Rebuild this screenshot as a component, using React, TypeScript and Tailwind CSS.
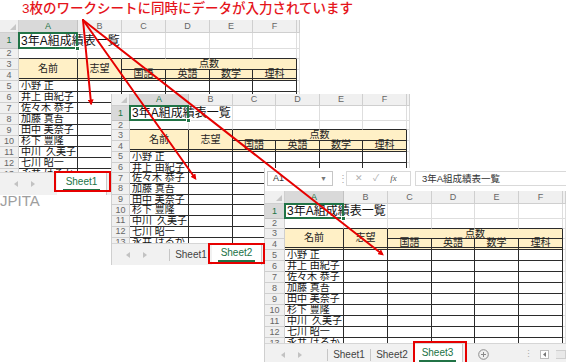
import type { ReactNode } from 'react';

const COLS = ['A', 'B', 'C', 'D', 'E', 'F'];
const SUBJECTS = ['国語', '英語', '数学', '理科'];
const NAMES = ['小野 正', '井上 由紀子', '佐々木 恭子', '加藤 真吾', '田中 美奈子', '杉下 豊隆', '中川\u2002久美子', '七川 昭一', '永井 はるか'];

const HEAD = 'flex items-center justify-center border-r border-b border-[#cfcfcf] bg-[#f0f0f0] text-[9px] leading-none text-[#666]';
const HEAD_SEL = 'flex items-center justify-center border-r border-b border-[#c2c2c2] bg-[#d9d9d9] text-[9px] leading-none text-[#217346]';
const GRID = 'border-r border-b border-[#dedede] bg-white';
const ABOVE = 'border-r border-b border-r-[#dedede] border-b-[#2b2b2b] bg-white';
const LINE = 'border-r border-b border-[#2b2b2b] bg-white';
const FILL = 'flex items-center justify-center border-r border-b border-[#2b2b2b] bg-[#fff0c6] text-[10px] leading-none text-[#222]';
const FILL_LAST =
  'flex items-center justify-center border-r border-b-[3px] border-double border-[#2b2b2b] bg-[#fff0c6] text-[10px] leading-none text-[#222]';

function SheetGrid({ layout }: { layout: string }) {
  const cells: ReactNode[] = [];

  cells.push(
    <div key="corner" className="relative border-r border-b border-[#cfcfcf] bg-[#f0f0f0]">
      <span className="absolute right-[2px] bottom-[2px] h-0 w-0 border-b-[6px] border-l-[6px] border-b-[#c6c6c6] border-l-transparent" />
    </div>,
  );
  COLS.forEach((c, i) =>
    cells.push(
      <div key={`h${c}`} className={i === 0 ? HEAD_SEL : HEAD}>
        {c}
      </div>,
    ),
  );
  cells.push(<div key="hG" className={HEAD} />);

  // row 1 - title, A1 selected
  cells.push(
    <div key="r1" className={HEAD_SEL}>
      1
    </div>,
  );
  cells.push(
    <div key="a1" className="relative border-r border-b border-[#dedede] bg-white">
      <span className="absolute inset-y-0 left-[2px] z-10 flex items-center whitespace-nowrap text-[12px] text-[#111]">3年A組成績表一覧</span>
      <span className="absolute -inset-px z-20 border-2 border-[#217346]" />
      <span className="absolute -right-[3px] -bottom-[3px] z-30 h-[5px] w-[5px] border border-white bg-[#217346]" />
    </div>,
  );
  for (let i = 0; i < 6; i++) cells.push(<div key={`r1c${i}`} className={GRID} />);

  // row 2
  cells.push(
    <div key="r2" className={HEAD}>
      2
    </div>,
  );
  for (let i = 0; i < 6; i++) cells.push(<div key={`r2c${i}`} className={ABOVE} />);
  cells.push(<div key="r2g" className={GRID} />);

  // rows 3-4 header block
  cells.push(
    <div key="r3" className={HEAD}>
      3
    </div>,
  );
  cells.push(
    <div key="name" className={`row-span-2 ${FILL_LAST}`}>
      名前
    </div>,
  );
  cells.push(
    <div key="wish" className={`row-span-2 ${FILL_LAST}`}>
      志望
    </div>,
  );
  cells.push(
    <div key="score" className={`col-span-4 ${FILL}`}>
      点数
    </div>,
  );
  cells.push(<div key="r3g" className={GRID} />);
  cells.push(
    <div key="r4" className={HEAD}>
      4
    </div>,
  );
  SUBJECTS.forEach((s) =>
    cells.push(
      <div key={s} className={FILL_LAST}>
        {s}
      </div>,
    ),
  );
  cells.push(<div key="r4g" className={GRID} />);

  // student rows
  NAMES.forEach((n, r) => {
    cells.push(
      <div key={`rh${r}`} className={HEAD}>
        {r + 5}
      </div>,
    );
    cells.push(
      <div key={`n${r}`} className={`${LINE} flex items-center overflow-hidden whitespace-nowrap pl-[2px] text-[10px] leading-none text-[#111]`}>
        {n}
      </div>,
    );
    for (let i = 0; i < 5; i++) cells.push(<div key={`d${r}-${i}`} className={LINE} />);
    cells.push(<div key={`g${r}`} className={GRID} />);
  });

  return <div className={`grid h-full overflow-hidden ${layout}`}>{cells}</div>;
}

function NavArrows({ className }: { className: string }) {
  return (
    <div className={`flex shrink-0 items-center ${className}`}>
      <svg width="4" height="6" viewBox="0 0 4 6">
        <path d="M4 0L0 3L4 6z" fill="#c2c2c2" />
      </svg>
      <svg width="4" height="6" viewBox="0 0 4 6">
        <path d="M0 0L4 3L0 6z" fill="#c2c2c2" />
      </svg>
    </div>
  );
}

function TabBar({ tabs, active, nav, height, extras }: { tabs: string[]; active: number; nav: string; height: string; extras?: boolean }) {
  return (
    <div className={`flex shrink-0 items-stretch border-t border-[#d6d6d6] bg-[#f1f1f1] text-[10px] ${height}`}>
      <NavArrows className={nav} />
      {tabs.map((t, i) =>
        i === active ? (
          <div key={t} className="flex w-[50px] shrink-0 items-center justify-center border-r border-[#c9c9c9] bg-white">
            <span className="border-b-2 border-[#217346] px-[3px] pb-[2px] leading-none text-[#217346]">{t}</span>
          </div>
        ) : (
          <div key={t} className="flex w-[43px] shrink-0 items-center">
            <span className="h-[12px] w-px bg-[#c6c6c6]" />
            <span className="flex-1 text-center leading-none text-[#444]">{t}</span>
          </div>
        ),
      )}
      {extras && (
        <>
          <div className="ml-[15px] flex items-center">
            <svg width="11" height="11" viewBox="0 0 11 11">
              <circle cx="5.5" cy="5.5" r="4.8" fill="none" stroke="#8a8a8a" strokeWidth="1" />
              <path d="M5.5 3v5M3 5.5h5" stroke="#8a8a8a" strokeWidth="1" />
            </svg>
          </div>
          <div className="ml-auto flex items-center gap-[7px]">
            <span className="text-[9px] leading-none text-[#aaaaaa]">⋮</span>
            <div className="flex h-[9px] w-[9px] items-center justify-center border border-[#bdbdbd] bg-white">
              <svg width="3" height="5" viewBox="0 0 3 5">
                <path d="M3 0L0 2.5L3 5z" fill="#777" />
              </svg>
            </div>
            <div className="h-[9px] w-[10px] border border-l-0 border-[#cfcfcf] bg-[#e9e9e9]" />
          </div>
        </>
      )}
    </div>
  );
}

function FormulaBar() {
  return (
    <div className="flex h-[23px] shrink-0 items-center bg-white pb-[2px] text-[9px] text-[#333]">
      <div className="ml-[2px] flex h-[15px] w-[66px] items-center justify-between border border-[#c6c6c6] px-[5px]">
        <span className="leading-none">A1</span>
        <span className="text-[7px] leading-none text-[#777]">▼</span>
      </div>
      <span className="ml-[5px] w-[8px] text-[10px] leading-none text-[#aaaaaa]">⋮</span>
      <div className="flex h-[15px] w-[65px] items-center border border-[#d9d9d9] text-[#b0b0b0]">
        <span className="ml-[8px] text-[9px] leading-none">✕</span>
        <span className="ml-[10px] text-[9px] leading-none">✓</span>
        <span className="ml-[11px] font-['Liberation_Serif',serif] text-[9px] italic leading-none text-[#555]">fx</span>
      </div>
      <div className="ml-[4px] flex h-[15px] flex-1 items-center border border-r-0 border-[#d9d9d9] px-[6px] text-[9.5px] leading-none">
        3年A組成績表一覧
      </div>
    </div>
  );
}

export default function App() {
  return (
    <div className="relative h-[362px] w-[566px] overflow-hidden bg-white font-['Liberation_Sans','Noto_Sans_CJK_JP',sans-serif]">
      <p className="pl-[22px] text-[13.5px] leading-[18px] font-medium text-[#e5141b]">3枚のワークシートに同時にデータが入力されています</p>

      {/* Sheet1 */}
      <div className="absolute left-0 top-[20px] flex h-[175px] w-[300px] flex-col overflow-hidden bg-white">
        <div className="h-[152px] shrink-0 overflow-hidden">
          <SheetGrid layout="grid-cols-[19px_59px_44px_44px_44px_43px_44px_1fr] grid-rows-[13px_16px_10px_11px_11px_repeat(9,11px)]" />
        </div>
        <TabBar tabs={['Sheet1']} active={0} nav="w-[57px] gap-[13px] pl-[14px]" height="h-[23px]" />
      </div>

      <p className="absolute left-0 top-[192px] text-[15px] leading-[18px] text-[#9e9e9e]">JPITA</p>

      {/* Sheet2 */}
      <div className="absolute left-[111px] top-[94px] flex h-[171px] w-[299px] flex-col overflow-hidden border-l border-[#cfcfcf] bg-white">
        <div className="h-[149px] shrink-0 overflow-hidden">
          <SheetGrid layout="grid-cols-[18px_59px_44px_43px_44px_43px_44px_1fr] grid-rows-[12px_15px_9px_11px_11px_repeat(9,10.7px)]" />
        </div>
        <TabBar tabs={['Sheet1', 'Sheet2']} active={1} nav="w-[57px] gap-[13px] pl-[14px]" height="h-[22px]" />
      </div>

      {/* Sheet3 */}
      <div className="absolute left-[264px] top-[168px] flex h-[197px] w-[302px] flex-col overflow-hidden border-l border-[#cfcfcf] bg-white">
        <FormulaBar />
        <div className="h-[152px] shrink-0 overflow-hidden">
          <SheetGrid layout="grid-cols-[20px_59px_44px_44px_43px_44px_44px_1fr] grid-rows-[13px_15px_10px_10px_11px_repeat(9,11px)]" />
        </div>
        <TabBar tabs={['Sheet1', 'Sheet2', 'Sheet3']} active={2} nav="w-[62px] gap-[13px] pl-[16px]" height="h-[22px]" extras />
      </div>

      {/* highlighted tabs */}
      <div className="absolute left-[54px] top-[171px] h-[21px] w-[57px] border-2 border-[#e60000]" />
      <div className="absolute left-[208px] top-[243px] h-[21px] w-[57px] border-2 border-[#e60000]" />
      <div className="absolute left-[413px] top-[341px] h-[24px] w-[54px] border-2 border-[#e60000]" />

      <svg className="pointer-events-none absolute left-0 top-0 z-50" width="566" height="362" viewBox="0 0 566 362">
        <defs>
          <marker id="head" viewBox="0 0 10 10" refX="6" refY="5" markerWidth="3" markerHeight="3" orient="auto">
            <path d="M0 0L10 5L0 10z" fill="#e60000" />
          </marker>
        </defs>
        <g stroke="#e60000" strokeWidth="2" strokeLinecap="round" markerEnd="url(#head)">
          <line x1="83" y1="20" x2="91" y2="103" />
          <line x1="83" y1="20" x2="195" y2="178" />
          <line x1="83" y1="20" x2="382" y2="254" />
        </g>
      </svg>
    </div>
  );
}
